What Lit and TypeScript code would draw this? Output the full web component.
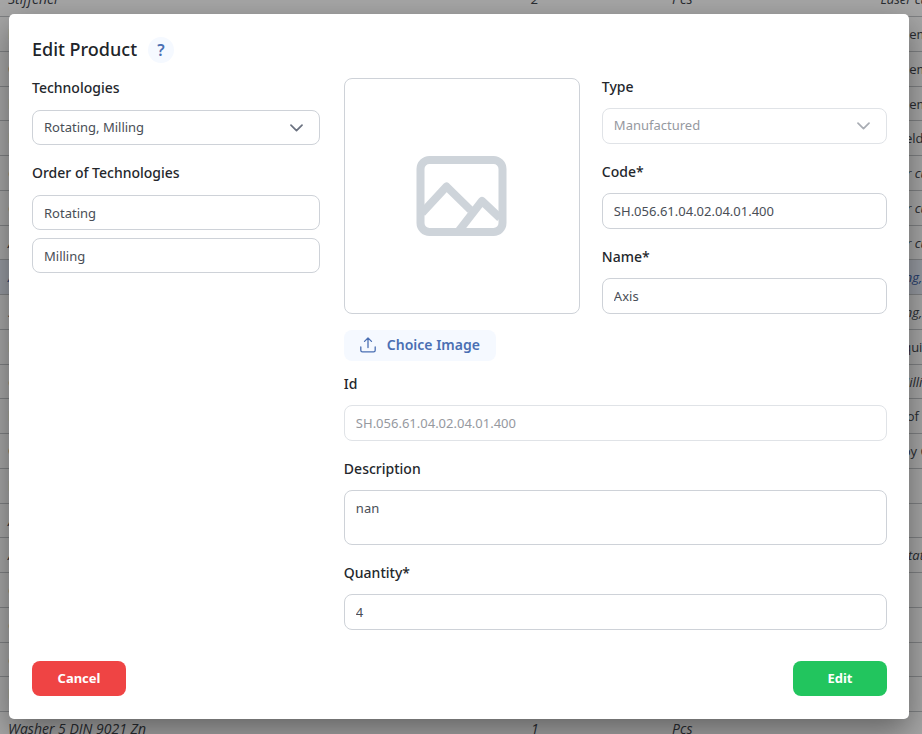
import { LitElement, html, css, svg, nothing } from "lit";
import { customElement, property, state } from "lit/decorators.js";
import { classMap } from "lit/directives/class-map.js";

interface Row {
  name: string;
  qty: string;
  unit: string;
  tech: string;
  italic?: boolean;
  active?: boolean;
}

const part = (name: string, tech: string, italic = true, active = false): Row => ({
  name,
  qty: "1",
  unit: "Pcs",
  tech,
  italic,
  active,
});

const ROWS: Row[] = [
  { name: "Stiffener", qty: "2", unit: "Pcs", tech: "Laser cutting", italic: true },
  part("Frame", "Assembly", false),
  part("Cover", "Assembly", false),
  part("Frame", "Assembly", false),
  part("Base", "Welding", false),
  part("Clamp", "Laser cutting"),
  part("Corner", "Laser cutting"),
  part("Angle", "Laser cutting"),
  part("Axis", "Rotating, Milling", true, true),
  part("Shaft", "Rotating, Milling"),
  part("Lock", "Acquiring", false),
  part("Carrier", "Milling"),
  part("Link", "Out of stock", false),
  part("Chain", "Alloy Cast", false),
  part("Label", "", false),
  part("Adapter", ""),
  part("Arbor", "Rotating"),
  part("Cap", ""),
  part("Clip", ""),
  part("Catch", ""),
  part("Pin", "", false),
  part("Washer 5 DIN 9021 Zn", ""),
];

@customElement("parts-table")
export class PartsTable extends LitElement {
  static styles = css`
    :host {
      display: block;
    }
    .table {
      width: 117vw;
      border-collapse: separate;
      border-spacing: 0;
      table-layout: fixed;
      font-family: "Open Sans", sans-serif;
      font-size: 14px;
      color: #40444c;
    }
    .name {
      width: 50vw;
    }
    .unit,
    .qty {
      width: 16vw;
    }
    .cell {
      box-sizing: border-box;
      height: 35px;
      padding: 0 8px;
      line-height: 20px;
      border-bottom: 1px solid #c4c6ca;
      text-align: center;
      white-space: nowrap;
    }
    .row:nth-child(4n) .cell {
      height: 34px;
    }
    .cell.left {
      text-align: left;
    }
    .cell.small {
      font-size: 13px;
    }
    .italic {
      font-style: italic;
    }
    .active {
      background: #e6edf7;
      color: #3a5ea8;
    }
  `;

  render() {
    return html`<table class="table">
      <colgroup>
        <col class="name" />
        <col class="qty" />
        <col class="unit" />
        <col class="tech" />
      </colgroup>
      <tbody>
        ${ROWS.map(
          (r) => html`<tr class=${classMap({ row: true, italic: !!r.italic, active: !!r.active })}>
            <td class="cell left">${r.name}</td>
            <td class="cell">${r.qty}</td>
            <td class="cell">${r.unit}</td>
            <td class="cell small">${r.tech}</td>
          </tr>`
        )}
      </tbody>
    </table>`;
  }
}

const controlStyles = css`
  .field {
    display: flex;
    flex-direction: column;
    gap: 12px;
  }
  .label {
    font-size: 14px;
    font-weight: 500;
    line-height: 18px;
    color: #24272c;
  }
  .control {
    box-sizing: border-box;
    display: block;
    width: 100%;
    height: 36px;
    margin: 0;
    padding: 0 11px;
    border: 1px solid #ced2d8;
    border-radius: 8px;
    background: #fff;
    color: #494e56;
    font: inherit;
    font-size: 13px;
    line-height: 18px;
    appearance: none;
    outline: none;
  }
  .control:focus-visible {
    border-color: #4a6fb3;
  }
  .control:disabled {
    color: #96999f;
    border-color: #e0e3e7;
    opacity: 1;
  }
  .area {
    height: 55px;
    padding-top: 8px;
    resize: none;
  }
  .compact .control {
    height: 35px;
  }
  .compact .label {
    line-height: 20px;
  }
  .pick {
    position: relative;
  }
  .pick .control {
    padding-bottom: 2px;
  }
  .chevron {
    position: absolute;
    top: 0;
    bottom: 0;
    right: 16px;
    margin: auto 0;
    color: #6b7280;
    pointer-events: none;
  }
  .chevron.dim {
    color: #a9adb4;
  }
`;

@customElement("app-root")
export class AppRoot extends LitElement {
  @property() code = "SH.056.61.04.02.04.01.400";
  @state() private order = ["Rotating", "Milling"];

  static styles = [
    controlStyles,
    css`
      :host {
        display: block;
        position: relative;
        min-height: 100vh;
        overflow: hidden;
        font-family: "Noto Sans", "Open Sans", sans-serif;
      }
      .backdrop {
        position: absolute;
        inset: 0;
        overflow: hidden;
        display: flex;
        flex-direction: column;
        background: #fff;
      }
      .list {
        margin-top: -18px;
      }
      .shade {
        position: absolute;
        inset: 0;
        background: rgba(0, 0, 0, 0.35);
      }
      .stage {
        box-sizing: border-box;
        position: relative;
        padding: 14px 13px 15px 9px;
      }
      .dialog {
        padding: 22px 22px 23px 23px;
        border-radius: 5px;
        background: #fff;
        box-shadow: 0 12px 32px rgba(0, 0, 0, 0.4);
      }
      .head {
        display: flex;
        align-items: center;
        gap: 11px;
        height: 27px;
        margin-bottom: 15px;
      }
      .title {
        margin: 0;
        font-size: 18px;
        font-weight: 500;
        line-height: 27px;
        color: #212429;
      }
      .help {
        width: 26px;
        height: 26px;
        padding: 0;
        border: 0;
        border-radius: 50%;
        background: #f5f9ff;
        color: #4a6fb3;
        font: inherit;
        font-size: 16px;
        font-weight: 600;
        line-height: 26px;
      }
      .columns {
        display: grid;
        grid-template-columns: minmax(0, 53fr) minmax(0, 100fr);
        gap: 24px;
      }
      .side {
        display: flex;
        flex-direction: column;
        gap: 18px;
      }
      .order {
        display: flex;
        flex-direction: column;
        gap: 8px;
      }
      .stack {
        display: flex;
        flex-direction: column;
        gap: 19px;
      }
      .top {
        display: grid;
        grid-template-columns: 236px minmax(0, 1fr);
        gap: 22px;
      }
      .preview {
        box-sizing: border-box;
        display: flex;
        align-items: center;
        justify-content: center;
        height: 236px;
        border: 1px solid #ced2d8;
        border-radius: 8px;
        color: #ced4da;
      }
      .upload {
        display: inline-flex;
        align-items: center;
        gap: 10px;
        height: 31px;
        margin: 16px 0 14px;
        padding: 0 16px 2px;
        border: 0;
        border-radius: 8px;
        background: #f5f9ff;
        color: #4a6fb3;
        font: inherit;
        font-size: 14px;
        font-weight: 600;
        line-height: 20px;
      }
      .foot {
        display: flex;
        justify-content: space-between;
        margin-top: 31px;
      }
      .action {
        width: 94px;
        height: 35px;
        padding: 0 0 2px;
        border: 0;
        border-radius: 8px;
        color: #fff;
        font: inherit;
        font-size: 13px;
        font-weight: 700;
      }
      .cancel {
        background: #ef4444;
      }
      .edit {
        background: #22c55e;
      }
    `,
  ];

  private chevron(dim = false) {
    return html`<svg
      class=${classMap({ chevron: true, dim })}
      width="14"
      height="8"
      viewBox="0 0 14 8"
      fill="none"
      stroke="currentColor"
      stroke-width="1.7"
      stroke-linecap="round"
      stroke-linejoin="round"
      aria-hidden="true"
    >
      ${svg`<path d="M1 1.2 6.5 6.6 12 1.2" />`}
    </svg>`;
  }

  private input(id: string, label: string, value: string, disabled = false) {
    return html`<div class="field">
      <label class="label" for=${id}>${label}</label>
      <input class="control" id=${id} type="text" .value=${value} ?disabled=${disabled} />
    </div>`;
  }

  private select(id: string, label: string, value: string, disabled = false) {
    return html`<div class="field">
      <label class="label" for=${id}>${label}</label>
      <div class="pick">
        <select class="control" id=${id} ?disabled=${disabled}>
          <option>${value}</option>
        </select>
        ${this.chevron(disabled)}
      </div>
    </div>`;
  }

  render() {
    return html`
      <div class="backdrop" aria-hidden="true">
        <parts-table class="list"></parts-table>
        <div class="shade"></div>
      </div>
      <div class="stage">
        <form class="dialog" role="dialog" aria-labelledby="title" @submit=${(e: Event) => e.preventDefault()}>
          <header class="head">
            <h1 class="title" id="title">Edit Product</h1>
            <button class="help" type="button">?</button>
          </header>
          <div class="columns">
            <div class="side compact">
              ${this.select("tech", "Technologies", this.order.join(", "))}
              <div class="field">
                <label class="label" for="order-0">Order of Technologies</label>
                <div class="order">
                  ${this.order.map(
                    (name, i) => html`<input
                      class="control"
                      id="order-${i}"
                      type="text"
                      readonly
                      aria-label=${i ? `Technology ${i + 1}` : nothing}
                      .value=${name}
                    />`
                  )}
                </div>
              </div>
            </div>
            <div class="main">
              <div class="top">
                <div class="preview">
                  <svg width="91" height="80" viewBox="0 0 91 80" fill="none" stroke="currentColor" stroke-width="8" stroke-linejoin="round" aria-hidden="true">
                    <rect x="4.5" y="4" width="82" height="72" rx="9" />
                    <path d="M6 57 30.5 30.5 54.5 54" />
                    <path d="M42 76 66 45 84 62" />
                  </svg>
                </div>
                <div class="stack">
                  ${this.select("type", "Type", "Manufactured", true)}
                  ${this.input("code", "Code*", this.code)}
                  ${this.input("name", "Name*", "Axis")}
                </div>
              </div>
              <button class="upload" type="button">
                <svg width="17" height="16" viewBox="0 0 17 16" fill="none" stroke="currentColor" stroke-width="1.3" stroke-linecap="round" stroke-linejoin="round" aria-hidden="true">
                  <path d="M8 10.5V1M4.5 4.4 8 1 11.5 4.4" />
                  <path d="M0.8 10V13.2Q0.8 14.8 2.4 14.8H13.6Q15.2 14.8 15.2 13.2V10" />
                </svg>
                Choice Image
              </button>
              <div class="stack">
                ${this.input("id", "Id", this.code, true)}
                <div class="field">
                  <label class="label" for="description">Description</label>
                  <textarea class="control area" id="description" .value=${"nan"}></textarea>
                </div>
                ${this.input("quantity", "Quantity*", "4")}
              </div>
            </div>
          </div>
          <footer class="foot">
            <button class="action cancel" type="button">Cancel</button>
            <button class="action edit" type="submit">Edit</button>
          </footer>
        </form>
      </div>
    `;
  }
}
